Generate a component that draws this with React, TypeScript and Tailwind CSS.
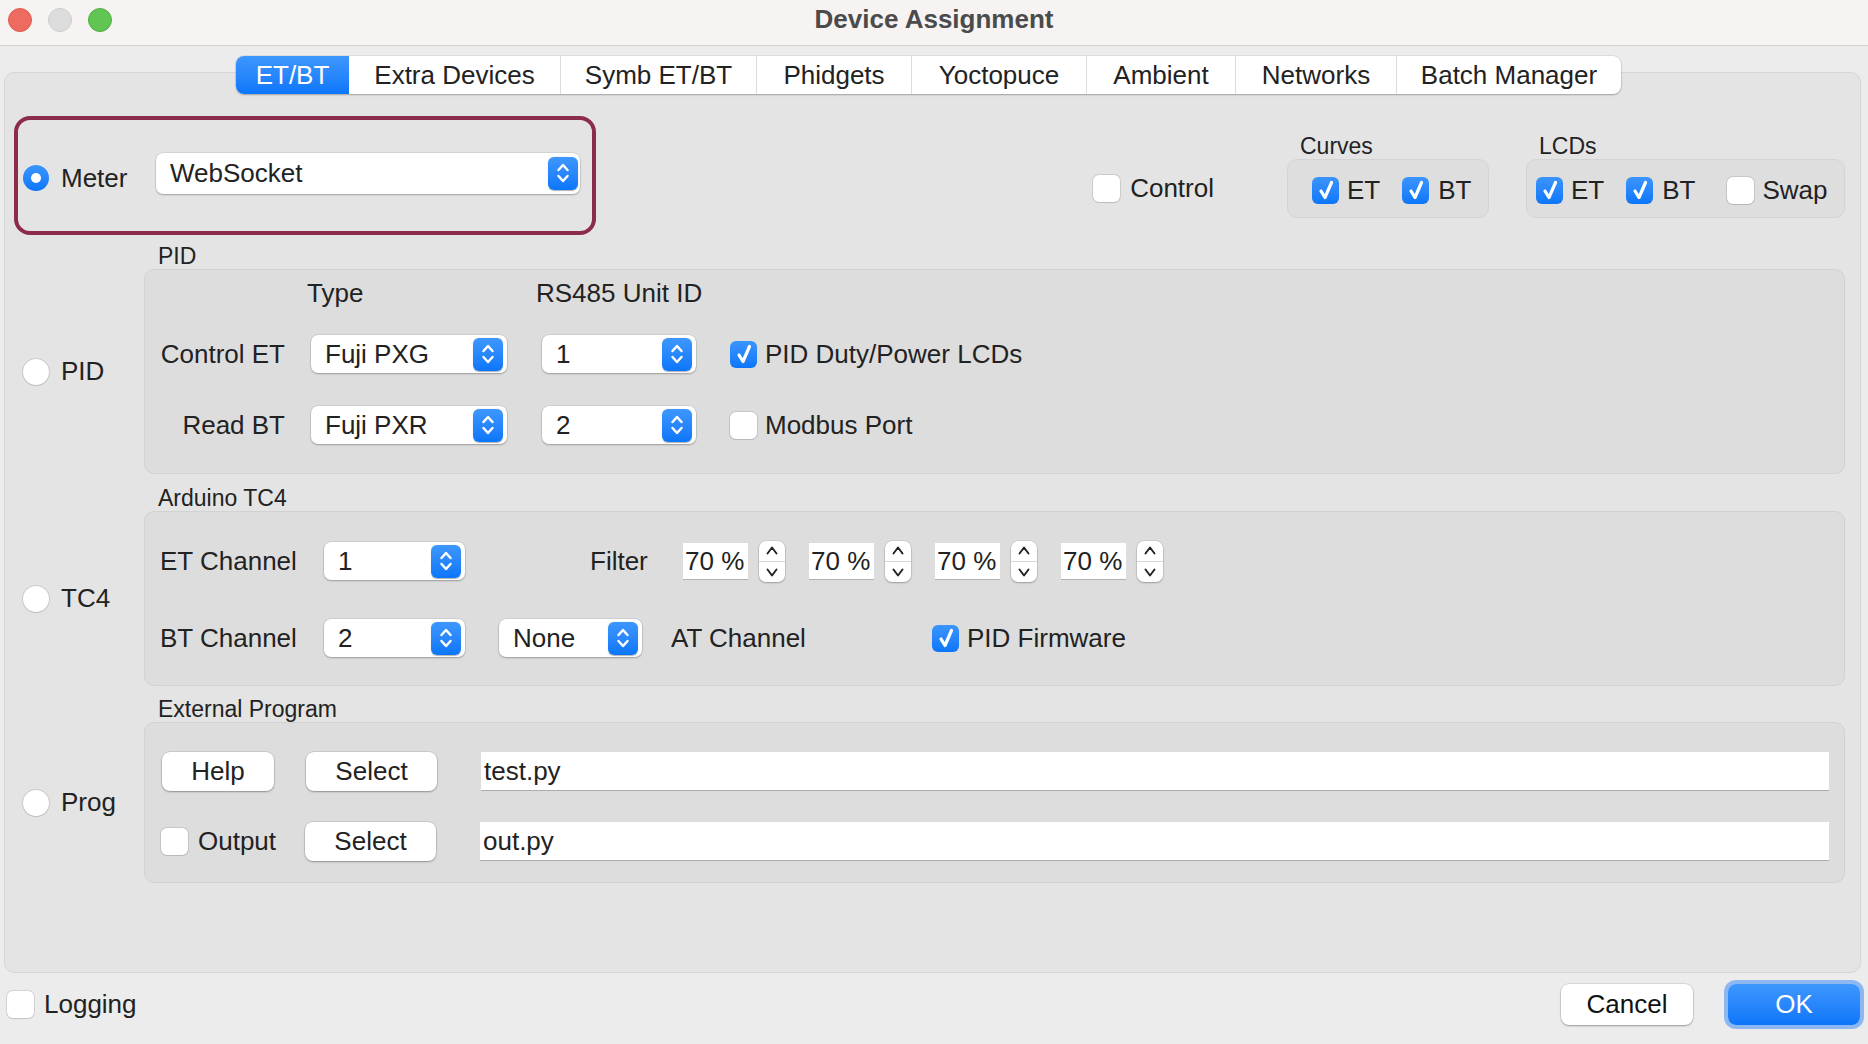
import React from "react";

// small macOS-style controls

function Stepper() {
  return (
    <span className="flex h-[33px] w-[30px] shrink-0 items-center justify-center rounded-[6px] bg-linear-to-b from-[#3d97fd] to-[#0a76fa] shadow-[0_0.5px_1px_rgba(0,0,0,0.3)]">
      <svg width="16" height="26" viewBox="0 0 16 26" fill="none" stroke="white" strokeWidth="2.5" strokeLinecap="round" strokeLinejoin="round">
        <path d="M3.5 10 8 5l4.5 5" />
        <path d="M3.5 16 8 21l4.5-5" />
      </svg>
    </span>
  );
}

function Combo({ value, className }: { value: string; className: string }) {
  return (
    <div className={`flex shrink-0 items-center justify-between rounded-[7px] bg-white pl-[14px] pr-[4px] shadow-[0_0_0_0.5px_rgba(0,0,0,0.12),0_1px_2px_rgba(0,0,0,0.25)] ${className}`}>
      <span>{value}</span>
      <Stepper />
    </div>
  );
}

function Check({ on }: { on?: boolean }) {
  if (on)
    return (
      <span className="flex h-[27px] w-[27px] shrink-0 items-center justify-center rounded-[6px] bg-linear-to-b from-[#3a95fd] to-[#0a76f9]">
        <svg width="18" height="22" viewBox="0 0 18 22" fill="none" stroke="white" strokeWidth="3.2" strokeLinecap="round" strokeLinejoin="round">
          <path d="M4 12 8 18.5 14.5 3.5" />
        </svg>
      </span>
    );
  return <span className="block h-[27px] w-[27px] shrink-0 rounded-[6px] bg-white shadow-[0_0_0_1px_rgba(0,0,0,0.1),0_1px_1px_rgba(0,0,0,0.08)]" />;
}

function Radio({ on }: { on?: boolean }) {
  if (on)
    return (
      <span className="flex h-[26px] w-[26px] shrink-0 items-center justify-center rounded-full bg-linear-to-b from-[#3a95fd] to-[#0a76f9]">
        <span className="h-[10px] w-[10px] rounded-full bg-white" />
      </span>
    );
  return <span className="block h-[26px] w-[26px] shrink-0 rounded-full bg-white shadow-[0_0_0_1px_rgba(0,0,0,0.1),0_1px_1px_rgba(0,0,0,0.08)]" />;
}

function Spin() {
  return (
    <div className="flex items-center">
      <div className="flex h-[36px] w-[65px] items-center bg-white pl-[2px] shadow-[0_1px_0_rgba(0,0,0,0.2)]">70 %</div>
      <div className="ml-[11px] flex h-[41px] w-[26px] flex-col items-center justify-between rounded-[7px] bg-white py-[4px] shadow-[0_0_0_0.5px_rgba(0,0,0,0.12),0_1px_2px_rgba(0,0,0,0.25)]">
        <svg width="14" height="11" viewBox="0 0 14 11" fill="none" stroke="#222" strokeWidth="1.9" strokeLinecap="round" strokeLinejoin="round">
          <path d="M2.5 8.5 7 2.5l4.5 6" />
        </svg>
        <div className="h-px w-full bg-[#d6d6d6]" />
        <svg width="14" height="11" viewBox="0 0 14 11" fill="none" stroke="#222" strokeWidth="1.9" strokeLinecap="round" strokeLinejoin="round">
          <path d="M2.5 2.5 7 8.5l4.5-6" />
        </svg>
      </div>
    </div>
  );
}

function Btn({ label, className }: { label: string; className: string }) {
  return (
    <button type="button" className={`flex h-[39px] shrink-0 items-center justify-center rounded-[8px] bg-white shadow-[0_0_0_0.5px_rgba(0,0,0,0.15),0_1px_2px_rgba(0,0,0,0.3)] ${className}`}>
      {label}
    </button>
  );
}

function Field({ value }: { value: string }) {
  return <div className="flex h-[38px] flex-1 items-center bg-white pl-[3px] shadow-[0_1px_0_rgba(0,0,0,0.22)]">{value}</div>;
}

// one "radio + titled group box" block
function Section({ radio, title, children, boxClass }: { radio: string; title: string; children: React.ReactNode; boxClass: string }) {
  return (
    <div className="flex">
      <div className="flex w-[130px] shrink-0 flex-col">
        <div className="h-[26px]" />
        <div className="flex flex-1 items-center gap-[12px] pl-[9px]">
          <Radio />
          <span>{radio}</span>
        </div>
      </div>
      <div className="flex-1">
        <div className="h-[26px] pl-[14px] text-[23px] leading-[26px]">{title}</div>
        <div className={`rounded-[10px] border border-[#d2d2d2] bg-[#dddddd] pl-[15px] pr-[15px] ${boxClass}`}>{children}</div>
      </div>
    </div>
  );
}

const tabs = [
  { name: "ET/BT", w: "w-[113px]" },
  { name: "Extra Devices", w: "w-[211px]" },
  { name: "Symb ET/BT", w: "w-[196px]" },
  { name: "Phidgets", w: "w-[155px]" },
  { name: "Yoctopuce", w: "w-[175px]" },
  { name: "Ambient", w: "w-[149px]" },
  { name: "Networks", w: "w-[161px]" },
  { name: "Batch Manager", w: "w-[225px]" },
];

export default function App() {
  return (
    <div className="flex h-[1044px] w-[1868px] flex-col overflow-hidden bg-[#ececec] font-['Liberation_Sans',Arial,sans-serif] text-[26px] text-[#222]">
      {/* title bar */}
      <div className="grid h-[46px] shrink-0 grid-cols-[1fr_auto_1fr] items-center border-b border-[#d3d0cf] bg-[#f6f3f2] pb-[13px]">
        <div className="flex items-center gap-[16px] pl-[8px]">
          <span className="h-[24px] w-[24px] rounded-full border border-[#dd5a4f] bg-[#ee6b60]" />
          <span className="h-[24px] w-[24px] rounded-full border border-[#cdcdcd] bg-[#dddddd]" />
          <span className="h-[24px] w-[24px] rounded-full border border-[#4fae42] bg-[#61c554]" />
        </div>
        <div className="font-bold text-[#4b4b4b]">Device Assignment</div>
        <div />
      </div>

      {/* tabs */}
      <div className="relative z-10 mt-[10px] flex pl-[236px]">
        <div className="flex h-[38px] rounded-[8px] bg-white shadow-[0_0_0_0.5px_rgba(0,0,0,0.12),0_1px_2px_rgba(0,0,0,0.25)]">
          {tabs.map((t, i) =>
            i === 0 ? (
              <div key={t.name} className={`flex items-center justify-center rounded-l-[8px] bg-linear-to-b from-[#3d97fd] to-[#0a76fa] text-white ${t.w}`}>
                {t.name}
              </div>
            ) : (
              <div key={t.name} className={`flex items-center justify-center ${i > 1 ? "border-l border-[#dcdcdc]" : ""} ${t.w}`}>
                {t.name}
              </div>
            )
          )}
        </div>
      </div>

      {/* main panel */}
      <div className="-mt-[22px] ml-[4px] mr-[7px] flex-1 rounded-[10px] border border-[#d6d6d6] bg-[#e4e4e4] pl-[9px] pr-[15px] pt-[43px]">
        {/* meter row */}
        <div className="flex items-center">
          <div className="flex h-[119px] w-[582px] items-center rounded-[16px] border-4 border-[#8c2c4b] pl-[5px] pr-[12px] pt-[5px]">
            <Radio on />
            <span className="ml-[12px]">Meter</span>
            <div className="ml-auto mb-[10px] flex h-[41px] w-[424px] items-center justify-between rounded-[7px] bg-white pl-[14px] pr-[2px] shadow-[0_0_0_0.5px_rgba(0,0,0,0.12),0_1px_2px_rgba(0,0,0,0.25)]">
              <span>WebSocket</span>
              <Stepper />
            </div>
          </div>

          <div className="ml-auto flex items-end">
            <div className="flex h-[59px] items-center gap-[10px]">
              <Check />
              <span>Control</span>
            </div>
            <div className="ml-[73px]">
              <div className="h-[26px] pl-[13px] text-[23px] leading-[26px]">Curves</div>
              <div className="flex h-[59px] w-[202px] items-center rounded-[10px] border border-[#d4d4d4] bg-[#dedede] pl-[24px] pt-[3px]">
                <Check on />
                <span className="ml-[8px]">ET</span>
                <span className="ml-[22px] flex"><Check on /></span>
                <span className="ml-[9px]">BT</span>
              </div>
            </div>
            <div className="ml-[37px]">
              <div className="h-[26px] pl-[13px] text-[23px] leading-[26px]">LCDs</div>
              <div className="flex h-[59px] w-[319px] items-center rounded-[10px] border border-[#d4d4d4] bg-[#dedede] pl-[9px] pt-[3px]">
                <Check on />
                <span className="ml-[8px]">ET</span>
                <span className="ml-[22px] flex"><Check on /></span>
                <span className="ml-[9px]">BT</span>
                <span className="ml-[32px] flex"><Check /></span>
                <span className="ml-[8px]">Swap</span>
              </div>
            </div>
          </div>
        </div>

        {/* PID */}
        <div className="mt-[8px]">
          <Section radio="PID" title="PID" boxClass="h-[205px] pt-[10px]">
            <div className="flex h-[26px] leading-[26px]">
              <div className="w-[125px]" />
              <div className="ml-[22px] w-[229px]">Type</div>
              <div>RS485 Unit ID</div>
            </div>
            <div className="mt-[29px] flex h-[38px] items-center">
              <div className="w-[125px] text-right">Control ET</div>
              <Combo value="Fuji PXG" className="ml-[26px] h-[38px] w-[196px]" />
              <Combo value="1" className="ml-[35px] h-[38px] w-[154px]" />
              <span className="ml-[34px] flex"><Check on /></span>
              <span className="ml-[8px]">PID Duty/Power LCDs</span>
            </div>
            <div className="mt-[33px] flex h-[38px] items-center">
              <div className="w-[125px] text-right">Read BT</div>
              <Combo value="Fuji PXR" className="ml-[26px] h-[38px] w-[196px]" />
              <Combo value="2" className="ml-[35px] h-[38px] w-[154px]" />
              <span className="ml-[34px] flex"><Check /></span>
              <span className="ml-[8px]">Modbus Port</span>
            </div>
          </Section>
        </div>

        {/* Arduino TC4 */}
        <div className="mt-[11px]">
          <Section radio="TC4" title="Arduino TC4" boxClass="h-[175px] pt-[30px]">
            <div className="flex h-[38px] items-center">
              <div className="w-[164px]">ET Channel</div>
              <Combo value="1" className="h-[38px] w-[141px]" />
              <div className="ml-[125px] w-[93px]">Filter</div>
              <div className="flex gap-[24px]">
                <Spin />
                <Spin />
                <Spin />
                <Spin />
              </div>
            </div>
            <div className="mt-[39px] flex h-[38px] items-center">
              <div className="w-[164px]">BT Channel</div>
              <Combo value="2" className="h-[38px] w-[141px]" />
              <Combo value="None" className="ml-[34px] h-[38px] w-[143px]" />
              <div className="ml-[29px] w-[261px]">AT Channel</div>
              <Check on />
              <span className="ml-[8px]">PID Firmware</span>
            </div>
          </Section>
        </div>

        {/* External program */}
        <div className="mt-[10px]">
          <Section radio="Prog" title="External Program" boxClass="h-[161px] pt-[29px]">
            <div className="flex h-[38px] items-center">
              <Btn label="Help" className="ml-[2px] w-[112px]" />
              <Btn label="Select" className="ml-[32px] w-[131px]" />
              <div className="ml-[44px] flex flex-1">
                <Field value="test.py" />
              </div>
            </div>
            <div className="mt-[32px] flex h-[38px] items-center">
              <div className="flex w-[145px] items-center gap-[10px] pl-[1px]">
                <Check />
                <span>Output</span>
              </div>
              <Btn label="Select" className="w-[131px]" />
              <div className="ml-[44px] flex flex-1">
                <Field value="out.py" />
              </div>
            </div>
          </Section>
        </div>
      </div>

      {/* footer */}
      <div className="flex h-[71px] shrink-0 items-start pt-[11px] pr-[8px]">
        <div className="flex h-[41px] items-center gap-[10px] pl-[7px]">
          <Check />
          <span>Logging</span>
        </div>
        <Btn label="Cancel" className="ml-auto h-[41px] w-[132px] text-[#111]" />
        <button type="button" className="ml-[35px] flex h-[41px] w-[132px] items-center justify-center rounded-[8px] bg-linear-to-b from-[#3d97fd] to-[#0a76fa] text-white shadow-[0_0_0_4px_rgba(64,140,245,0.55)]">
          OK
        </button>
      </div>
    </div>
  );
}
